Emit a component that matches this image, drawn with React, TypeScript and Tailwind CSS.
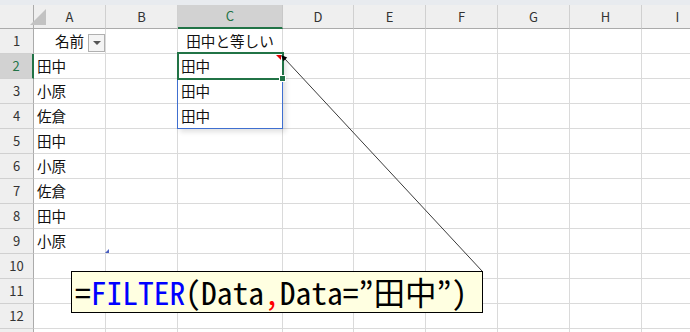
const cols = [
  { name: "A", w: "w-[72px]" },
  { name: "B", w: "w-[72px]" },
  { name: "C", w: "w-[105px]" },
  { name: "D", w: "w-[71px]" },
  { name: "E", w: "w-[72px]" },
  { name: "F", w: "w-[72px]" },
  { name: "G", w: "w-[72px]" },
  { name: "H", w: "w-[72px]" },
  { name: "I", w: "w-[72px]" },
];

const colA = ["", "田中", "小原", "佐倉", "田中", "小原", "佐倉", "田中", "小原", "", "", ""];
const colC = ["", "田中", "田中", "田中"];

const HeaderRow = () => (
  <div className="flex h-[24px] shrink-0 bg-[#efefef]">
    <div className="relative w-[34px] shrink-0 border-r border-b border-[#ababab]">
      <div className="absolute left-[14px] top-[4px] h-0 w-0 border-l-[16px] border-t-[16px] border-l-transparent border-t-transparent border-b-[#c2c2c2] border-r-[#c2c2c2] border-b-0 border-r-[16px]" />
    </div>
    {cols.map((c) =>
      c.name === "C" ? (
        <div
          key={c.name}
          className={`${c.w} shrink-0 flex items-center justify-center border-r border-r-[#c8c8c8] border-b-2 border-b-[#217346] bg-[#d2d2d2] text-[13px] text-[#217346]`}
        >
          {c.name}
        </div>
      ) : (
        <div
          key={c.name}
          className={`${c.w} shrink-0 flex items-center justify-center border-r border-r-[#d0d0d0] border-b border-b-[#ababab] text-[13px] text-[#333]`}
        >
          {c.name}
        </div>
      )
    )}
  </div>
);

const Row = ({ n }: { n: number }) => {
  const sel = n === 2;
  return (
    <div className="flex h-[25px] shrink-0">
      <div
        className={
          sel
            ? "w-[34px] shrink-0 flex items-center justify-center border-r-2 border-r-[#217346] border-b border-b-[#d0d0d0] bg-[#d2d2d2] text-[13px] text-[#217346]"
            : "w-[34px] shrink-0 flex items-center justify-center border-r border-r-[#ababab] border-b border-b-[#d0d0d0] bg-[#efefef] text-[13px] text-[#333]"
        }
      >
        {n}
      </div>
      {cols.map((c) => {
        let content: React.ReactNode = null;
        if (c.name === "A") {
          if (n === 1) {
            content = <span className="w-full text-center">名前</span>;
          } else {
            content = <span className="pl-[3px]">{colA[n - 1]}</span>;
          }
        }
        if (c.name === "C") {
          if (n === 1) content = <span className="w-full text-center">田中と等しい</span>;
          else if (colC[n - 1]) content = <span className="pl-[3px]">{colC[n - 1]}</span>;
        }
        return (
          <div
            key={c.name}
            className={`${c.w} relative shrink-0 flex items-center border-r border-b border-[#dadada] text-[14.6px] text-[#111]`}
          >
            {content}
            {c.name === "A" && n === 1 && (
              <div className="absolute left-[54px] top-[5px] flex h-[18px] w-[17px] items-center justify-center border border-[#b0b0b0] bg-[#f4f4f4]">
                <div className="h-0 w-0 border-x-[4px] border-t-[4px] border-x-transparent border-t-[#555]" />
              </div>
            )}
          </div>
        );
      })}
    </div>
  );
};

export default function App() {
  const rows = Array.from({ length: 12 }, (_, i) => i + 1);
  return (
    <div className="relative h-[332px] w-[690px] overflow-hidden bg-white font-['Noto_Sans_CJK_JP','Noto_Sans',sans-serif]">
      <div className="h-[5px] bg-[#e8ebef]" />
      <div className="flex flex-col">
        <HeaderRow />
        {rows.map((n) => (
          <Row key={n} n={n} />
        ))}
        <div className="flex h-[25px] shrink-0">
          <div className="w-[34px] shrink-0 border-r border-[#ababab] bg-[#efefef]" />
          {cols.map((c) => (
            <div key={c.name} className={`${c.w} shrink-0 border-r border-[#dadada]`} />
          ))}
        </div>
      </div>

      {/* spill range */}
      <div className="absolute left-[177px] top-[53px] h-[76px] w-[106px] border border-[#3f6fd0] shadow-[3px_3px_5px_rgba(0,0,0,0.12)]" />
      {/* active cell */}
      <div className="absolute left-[177px] top-[52px] h-[28px] w-[107px] border-2 border-[#217346]">
        <div className="absolute right-[1px] top-[1px] h-0 w-0 border-l-[5px] border-t-[5px] border-l-transparent border-t-[#e00000]" />
        <div className="absolute -bottom-[4px] -right-[4px] h-[7px] w-[7px] border border-white bg-[#217346]" />
      </div>
      {/* table resize handle */}
      <div className="absolute left-[101px] top-[249px] h-0 w-0 border-l-[4px] border-t-[4px] border-l-transparent border-t-transparent border-b-[#4a5fc0] border-r-[#4a5fc0] border-b-0 border-r-[4px]" />

      <svg className="pointer-events-none absolute left-0 top-0" width="690" height="332">
        <line x1="285" y1="59" x2="482" y2="271" stroke="#3a3a3a" strokeWidth="1" />
        <polygon points="281,55 287.2,57.6 283.4,61.2" fill="#000" />
      </svg>

      {/* formula callout */}
      <div className="absolute left-[71px] top-[271px] flex h-[42px] w-[412px] items-center border border-black bg-[#ffffe1] pl-[3px] font-['Noto_Sans_Mono_CJK_JP','DejaVu_Sans_Mono',monospace] text-[31.5px] leading-none text-black">
        <span>=</span>
        <span className="text-[#0000ff]">FILTER</span>
        <span>(Data</span>
        <span className="text-[#ff0000]">,</span>
        <span>Data=”田中”)</span>
      </div>
    </div>
  );
}
